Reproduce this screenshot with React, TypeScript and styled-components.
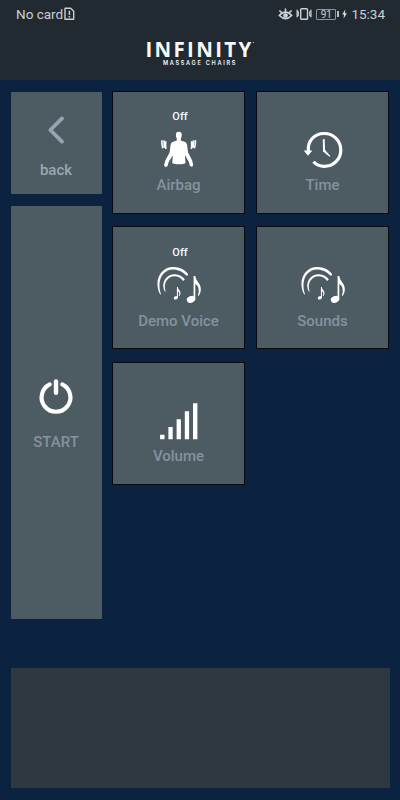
import React from 'react';
import styled, { createGlobalStyle } from 'styled-components';

const GlobalStyle = createGlobalStyle`
  * { box-sizing: border-box; }
  body { margin: 0; background: #0b2240; font-family: Roboto, "Liberation Sans", sans-serif; }
  svg { display: block; flex: none; }
`;

const Screen = styled.div`
  width: 400px;
  height: 800px;
  display: flex;
  flex-direction: column;
  background: #0b2240;
  overflow: hidden;
`;

const Header = styled.header`
  height: 80px;
  flex: none;
  background: #222a31;
`;

const StatusBar = styled.div`
  height: 28px;
  display: flex;
  justify-content: space-between;
  align-items: center;
  padding: 0 15px 0 16px;
  color: #c9cfd2;
  line-height: 20px;
`;

const StatusGroup = styled.div<{ $gap: number }>`
  display: flex;
  align-items: center;
  gap: ${(p) => p.$gap}px;
`;

const CarrierName = styled.span`
  font-size: 13.5px;
`;

const Clock = styled.span`
  font-size: 13.5px;
  margin-left: 1px;
`;

const Brand = styled.div`
  display: flex;
  flex-direction: column;
  align-items: center;
  padding-top: 10px;
  color: #f5f8fa;
  white-space: nowrap;
`;

const BrandName = styled.div`
  display: flex;
  height: 22px;
  padding-right: 1px;
  font: 700 20.5px/23px "Open Sans", sans-serif;
  letter-spacing: 2.3px;
`;

const TrademarkDot = styled.span`
  width: 1px;
  height: 1px;
  margin: 4px 0 0 -1px;
  background: #c9cfd2;
`;

const BrandTagline = styled.div`
  height: 7px;
  font: 600 5.6px/7px Inter, sans-serif;
  letter-spacing: 1.7px;
`;

const Controls = styled.main`
  display: flex;
  gap: 10.5px;
  height: 588px;
  flex: none;
  padding: 10.5px 0 0 10.5px;
`;

const SideColumn = styled.nav`
  display: flex;
  flex-direction: column;
  gap: 12px;
  width: 91px;
  padding-top: 1px;
`;

const SideButton = styled.button<{ $height: number; $iconTop: number; $labelGap: number }>`
  width: 91px;
  height: ${(p) => p.$height}px;
  padding: ${(p) => p.$iconTop}px 0 0;
  border: 0;
  border-radius: 1px;
  background: #4d5b63;
  display: flex;
  flex-direction: column;
  align-items: center;
  gap: ${(p) => p.$labelGap}px;
  font-family: inherit;
`;

const TileGrid = styled.div`
  display: grid;
  grid-template-columns: 133px 133px;
  grid-auto-rows: 123px;
  gap: 12.5px 11px;
  align-content: start;
`;

const Tile = styled.button`
  border: 1px solid #06090e;
  background: #4d5b63;
  padding: 18.5px 0 0;
  display: flex;
  flex-direction: column;
  align-items: center;
  font-family: inherit;
`;

const State = styled.span`
  height: 14px;
  margin: 0 0 5.5px 3px;
  color: #f5f8fa;
  font-size: 11px;
  line-height: 14px;
  font-weight: 500;
`;

const Label = styled.span<{ $bright?: boolean }>`
  color: ${(p) => (p.$bright ? '#98a8b4' : '#84939f')};
  font-size: 15px;
  font-weight: 500;
  line-height: 20px;
  white-space: nowrap;
`;

const TileLabel = styled(Label)`
  margin-top: 5.5px;
`;

const MessagePanel = styled.section`
  width: 379px;
  height: 120px;
  margin-left: 10.5px;
  background: #2e3840;
`;

const SimIcon = () => (
  <svg width="11" height="14" viewBox="0 0 11 14" fill="none" stroke="#c9cfd2">
    <path d="M1 1.3h5.7l3 3v7.9H1z" strokeWidth="1.4" strokeLinejoin="round" />
    <path d="M5.4 3.8v4.2M5.4 9v1.5" strokeWidth="1.5" />
  </svg>
);

const EyeIcon = () => (
  <svg width="15" height="14" viewBox="0 0 15 14" fill="none" stroke="#c9cfd2" strokeLinecap="round">
    <path d="M1.3 8.5Q7.5 1.6 13.7 8.5Q7.5 14.6 1.3 8.5Z" strokeWidth="1.7" />
    <circle cx="7.5" cy="8.5" r="1.9" fill="#c9cfd2" />
    <path d="M1.8 3.9l2 1.7M7.5 2v2.4M13.2 3.9l-2 1.7" strokeWidth="1.5" />
  </svg>
);

const VibrateIcon = () => (
  <svg width="16" height="14" viewBox="0 0 16 14" fill="none" stroke="#c9cfd2">
    <rect x="4.7" y="1.7" width="6.8" height="10.6" rx=".8" strokeWidth="1.4" />
    <path d="M1.2 2.7v7.6M14.9 2.7v7.6" strokeWidth="1.4" />
    <path d="M2.5 4.2v5M13.6 4.2v5" strokeWidth=".9" />
  </svg>
);

const Battery = styled.span`
  display: flex;
  align-items: center;
  gap: 1px;
  margin-left: 1px;
`;

const BatteryBody = styled.span`
  width: 20px;
  height: 11px;
  border: 1px solid #8d9599;
  border-radius: 1px;
  font-size: 10px;
  line-height: 9px;
  text-align: center;
`;

const BatteryCap = styled.span`
  width: 2px;
  height: 6px;
  background: #b5bcc0;
`;

const BoltIcon = () => (
  <svg width="5" height="10" viewBox="0 0 5 10" fill="#d9dee0">
    <path d="M3.3.5L.2 5.4H2L1.6 9.5 4.9 4.3H3z" />
  </svg>
);

const BackIcon = () => (
  <svg width="20" height="30" viewBox="0 0 20 30" fill="none" stroke="#95a5b1">
    <path d="M16 3.4L4.3 15 16 26.6" strokeWidth="3.8" strokeLinecap="round" strokeLinejoin="round" />
  </svg>
);

const PowerIcon = () => (
  <svg width="36" height="36" viewBox="0 0 36 36" fill="none" stroke="#fff" strokeLinecap="round">
    <path d="M11.7 5.4A14.4 14.4 0 1 0 24.3 5.4" strokeWidth="4.2" />
    <path d="M18 2.4v11.4" strokeWidth="4.4" />
  </svg>
);

const AirbagIcon = () => (
  <svg width="40" height="40" viewBox="0 0 40 40" fill="#fff">
    <path d="M16.9 4.4C16.9 2.7 18 1.8 19.8 1.8S22.8 2.7 22.8 4.5C22.8 6.3 22.2 7.9 21.9 8.6V10.4L26.1 12C27.7 12.8 28.2 14.6 28.4 17.2L29 22.3 33.2 30.6 34.2 35 33 37 30.8 35.8 30 32.3 26.2 25.4 26 27 26.5 33C25 34.8 15 34.8 13.2 33L13.7 27 13.5 25.4 9.6 32.3 8.6 36 6.4 37.3 5 35.3 6.3 30.6 10.7 22.3 11.3 17.2C11.5 14.6 11.9 12.8 13.5 12L17.8 10.4V8.6C17.4 7.9 16.9 6.3 16.9 4.4Z" />
    <path d="M2.9 10.2Q2.6 14.2 3.8 18.2M5 10.4L5.4 17.8M6.7 11.2Q6.4 14.5 6.8 19M36.4 10.2Q36.8 14.2 35.4 18.2M34.5 10.4L34 17.8M32.6 11.2Q32.9 14.5 32.4 19" fill="none" stroke="#fff" strokeWidth="1.6" />
  </svg>
);

const TimeIcon = () => (
  <svg width="42" height="40" viewBox="0 0 42 40" fill="none" stroke="#fff">
    <path d="M6.5 22C4.8 11.3 12.2 3.5 22.2 3.5C31.6 3.5 38.8 10.7 38.8 20C38.8 29.3 31.6 36.4 22.2 36.4Q15.6 36.4 11.5 31.8" strokeWidth="3.2" />
    <path d="M1.7 20.5H10.4L6 25.7Z" fill="#fff" stroke="none" />
    <path d="M20.8 9.2L22.6 8.9 23.1 20.1 28.3 26 27.5 26.8 21 21.4Z" fill="#fff" stroke="none" />
  </svg>
);

const SoundIcon = () => (
  <svg width="48" height="40" viewBox="0 0 48 40" fill="#fff">
    <path d="M5.2 29.6C-1.8 16.5 5.2 2 18.2 2C25.2 2 30.5 5.2 33.2 9.4Q32.6 11 31.2 10.5C27.9 6.8 23 4.5 17.7 4.5C7.8 4.6 1.3 15.7 6 29.2Z" />
    <path d="M10 26.8C5.4 18 11.1 9.3 19.8 9.3C24.2 9.3 27.6 11.4 29.8 14.6Q29 16.2 27.7 15.4C25.5 12.6 22.6 11.2 19.5 11.2C12.6 11.3 8 18 10.6 26.5Z" />
    <path d="M21.9 22H22.8Q23.1 23.8 24.4 25.2C26.1 27.3 25.7 29.6 24.1 31.2L23.7 30.9C25 28.2 24.2 27 22.9 26.3V32.8H21.9Z" />
    <ellipse cx="20.9" cy="32.7" rx="2.2" ry="1.6" transform="rotate(-25 20.9 32.7)" />
    <ellipse cx="36" cy="34.4" rx="4.3" ry="3.3" transform="rotate(-22 36 34.4)" />
    <path d="M38.6 11H40.2Q40.6 14.2 43.3 17.5C47.2 22.4 46.1 27.8 43.5 31.1L42.8 30.6Q45.7 21.8 40.3 18.9V34.3H38.6Z" />
  </svg>
);

const VolumeIcon = () => (
  <svg width="40" height="40" viewBox="0 0 40 40" fill="#fff">
    <path d="M1.1 33.8h4.4v4.4H1.1zM9.4 26h4.3v12.2H9.4zM17.6 18.2h4.3v20h-4.3zM25.8 10.2h4.3v28h-4.3zM34 2.2h4.4v36H34z" />
  </svg>
);

const tiles: { label: string; state?: string; Icon: React.FC }[] = [
  { label: 'Airbag', state: 'Off', Icon: AirbagIcon },
  { label: 'Time', Icon: TimeIcon },
  { label: 'Demo Voice', state: 'Off', Icon: SoundIcon },
  { label: 'Sounds', Icon: SoundIcon },
  { label: 'Volume', Icon: VolumeIcon },
];

export default function App() {
  return (
    <Screen>
      <GlobalStyle />
      <Header>
        <StatusBar>
          <StatusGroup $gap={1}>
            <CarrierName>No card</CarrierName>
            <SimIcon />
          </StatusGroup>
          <StatusGroup $gap={3}>
            <EyeIcon />
            <VibrateIcon />
            <Battery>
              <BatteryBody>91</BatteryBody>
              <BatteryCap />
            </Battery>
            <BoltIcon />
            <Clock>15:34</Clock>
          </StatusGroup>
        </StatusBar>
        <Brand>
          <BrandName>
            INFINITY
            <TrademarkDot />
          </BrandName>
          <BrandTagline>MASSAGE CHAIRS</BrandTagline>
        </Brand>
      </Header>
      <Controls>
        <SideColumn>
          <SideButton $height={102} $iconTop={23.5} $labelGap={15}>
            <BackIcon />
            <Label $bright>back</Label>
          </SideButton>
          <SideButton $height={413.5} $iconTop={173} $labelGap={17.5}>
            <PowerIcon />
            <Label>START</Label>
          </SideButton>
        </SideColumn>
        <TileGrid>
          {tiles.map(({ label, state, Icon }) => (
            <Tile key={label}>
              <State>{state}</State>
              <Icon />
              <TileLabel>{label}</TileLabel>
            </Tile>
          ))}
        </TileGrid>
      </Controls>
      <MessagePanel />
    </Screen>
  );
}
